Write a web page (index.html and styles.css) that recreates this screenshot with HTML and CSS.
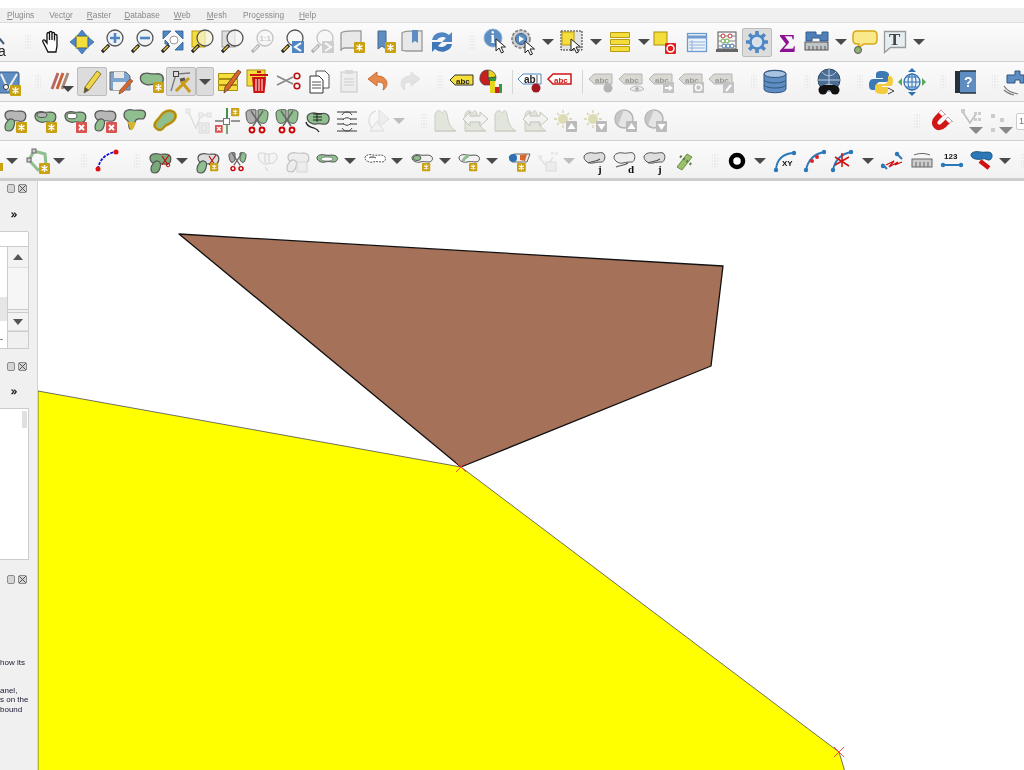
FILE: index.html
```html
<!DOCTYPE html>
<html lang="en">
<head>
<meta charset="utf-8">
<title>QGIS</title>
<link rel="stylesheet" href="styles.css">
</head>
<body>
<svg class="defs" aria-hidden="true">
<defs>
<path id="bl" stroke="#555" stroke-width="1.2" d="M1 6C1 2 6 1 10 2s7-1 10 1 2 8-1 9-6-1-9 0-9-1-9-6z"/>
<path id="bl2" stroke="#555" stroke-width="1.2" d="M1 9C1 5 5 0 8 1s3 4 2 7-2 5-5 5-4-1-4-4z"/>
<g id="bd"><rect width="11" height="11" rx="1" fill="#c9a112"/><path d="M5.5 2v7M2.5 3.5l6 4M8.5 3.5l-6 4" stroke="#fff" stroke-width="1.4"/></g>
<g id="rx"><rect width="11" height="11" rx="1" fill="#d9534f"/><path d="M3 3l5 5M8 3l-5 5" stroke="#fff" stroke-width="2"/></g>
<g id="mh"><path d="M12 18l-7 7" stroke="#222" stroke-width="3.2"/><path d="M11 19l-4.500 4.500" stroke="#e9c93c" stroke-width="1.500"/></g>
<circle id="lens" cx="18" cy="11" r="8" stroke="#555" stroke-width="1.300"/>
<path id="cur" fill="#fff" stroke="#222" d="M0 0l0 12 3-3 2.500 5 2-1-2.500-5 4.500 0z"/>
<path id="lb" d="M1 7l5-5h18v10H6z"/>
<g id="sc"><path d="M9 3l10 15M21 3L11 18" stroke="#666" stroke-width="1.500"/><circle cx="10" cy="22" r="2.500" fill="none" stroke="#c00" stroke-width="1.800"/><circle cx="20" cy="22" r="2.500" fill="none" stroke="#c00" stroke-width="1.800"/></g>
<g id="hill"><path d="M4 25V9c1-4 3-5 5-4s2 3 3 1 3-2 4 2 1 13 9 17z" fill="#e1e5dc" stroke="#c8ccc2"/><path d="M4 25h20" stroke="#c8ccc2"/></g>
<g id="lab"><use href="#lb" fill="#d6d3cc" stroke="#aaa"/><text x="7" y="11" class="t8" fill="#888">abc</text></g>
<g id="sun"><circle cx="12" cy="13" r="5" fill="#dedcb4"/><path d="M12 4v3M12 19v3M3 13h3M18 13h3M6 7l2 2M18 7l-2 2M6 19l2-2" stroke="#d3d1ac" stroke-width="1.300"/><rect x="15" y="15" width="11" height="11" rx="1" fill="#bbb"/></g>
<g id="moon"><circle cx="13" cy="13" r="9" fill="#e4e4e4" stroke="#b4b4b4" stroke-width="1.500"/><path d="M13 4a9 9 0 0 0-6 15z" fill="#c6c6c6"/><rect x="15" y="15" width="11" height="11" rx="1" fill="#bbb"/></g>
<g id="end"><circle r="2.200" fill="#2a78b8"/></g>
</defs>

<symbol id="p1" viewBox="0 0 30 30"><path d="M8 6L17 17" stroke="#47607a" stroke-width="2"/><text x="11" y="29" class="t12" fill="#222">a</text></symbol>
<symbol id="hand" viewBox="0 0 30 30"><path fill="#fff" stroke="#111" stroke-width="1.300" d="M10 23L6 15c-1-2 1-3 2.500-1L10 16V7c0-2 2.500-2 2.500 0v6-7.500c0-1.500 2.500-1.500 2.500 0V13 6.500c0-1.500 2.500-1.500 2.500 0v7-5c0-1.500 2.500-1.500 2.500 0V18c0 3-1 5-1 7h-8z"/></symbol>
<symbol id="pan" viewBox="0 0 30 30"><rect x="9" y="9" width="12" height="12" fill="#f5dd3c" stroke="#b79b12"/><path d="M15 3l5 6H10zM15 27l5-6H10zM3 15l6-5v10zM27 15l-6-5v10z" fill="#4e87c4" stroke="#2e5f99" stroke-width=".7"/></symbol>
<symbol id="zin" viewBox="0 0 30 30"><use href="#mh"/><use href="#lens" fill="#f0f3f6"/><path d="M18 6v10M13 11h10" stroke="#4e87c4" stroke-width="2.600"/></symbol>
<symbol id="zout" viewBox="0 0 30 30"><use href="#mh"/><use href="#lens" fill="#f0f3f6"/><path d="M13 11h10" stroke="#4e87c4" stroke-width="2.600"/></symbol>
<symbol id="zfull" viewBox="0 0 30 30"><path d="M6 4h8l-8 8zM26 4v8l-8-8zM26 23h-8l8-8zM8 17v-4l4 4z" fill="#4e87c4" stroke="#2d5c93" stroke-width=".8"/><circle cx="17" cy="13" r="4" fill="#fff" stroke="#999"/><use href="#mh"/></symbol>
<symbol id="zsel" viewBox="0 0 30 30"><rect x="5" y="4" width="13" height="16" fill="#f5dd3c" stroke="#b79b12"/><use href="#mh"/><use href="#lens" fill="#f7f4d8" fill-opacity=".7"/></symbol>
<symbol id="zlay" viewBox="0 0 30 30"><rect x="5" y="4" width="13" height="16" fill="#ddd" stroke="#999"/><use href="#mh"/><use href="#lens" fill="#f5f5f5" fill-opacity=".7"/></symbol>
<symbol id="z11" viewBox="0 0 30 30"><use href="#mh"/><use href="#lens" fill="#f5f5f5"/><text x="12.500" y="14" class="t8b" fill="#666">1:1</text></symbol>
<symbol id="zlast" viewBox="0 0 30 30"><use href="#mh"/><use href="#lens" fill="#f7f7f7"/><rect x="15" y="14" width="12" height="12" fill="#4e87c4"/><path d="M24 16l-6 4 6 4" fill="none" stroke="#fff" stroke-width="2"/></symbol>
<symbol id="znext" viewBox="0 0 30 30"><use href="#mh"/><use href="#lens" fill="#f7f7f7"/><rect x="15" y="14" width="12" height="12" fill="#4e87c4"/><path d="M18 16l6 4-6 4" fill="none" stroke="#fff" stroke-width="2"/></symbol>
<symbol id="nmap" viewBox="0 0 30 30"><path d="M4 6c3-3 16-2 20-2v17H8c-2 0-4 1-4 3z" fill="#e8e8e8" stroke="#999" stroke-width="1.300"/><use href="#bd" x="17" y="15"/></symbol>
<symbol id="nbm" viewBox="0 0 30 30"><path d="M11 4h8v18l-4-3-4 3z" fill="#5e8dc2" stroke="#46688f"/><use href="#bd" x="18" y="15"/></symbol>
<symbol id="sbm" viewBox="0 0 30 30"><path d="M5 6c3-3 15-2 20-2v20H9c-2 0-4-1-4 0z" fill="#e8e8e8" stroke="#999" stroke-width="1.300"/><path d="M15 3h6v13l-3-2-3 2z" fill="#5e8dc2"/></symbol>
<symbol id="refr" viewBox="0 0 30 30"><path d="M5 13a10 9 0 0 1 17-5l3-3v10H15l4-4a6 5 0 0 0-9 2z" fill="#4e87c4"/><path d="M25 17a10 9 0 0 1-17 5l-3 3V15h10l-4 4a6 5 0 0 0 9-2z" fill="#3f78b8"/></symbol>
<symbol id="iden" viewBox="0 0 30 30"><circle cx="12" cy="11" r="9" fill="#5e8dc2" stroke="#8fb2d8"/><text x="9.500" y="16" class="t13" fill="#fff">i</text><use href="#cur" x="15" y="12"/></symbol>
<symbol id="act" viewBox="0 0 30 30"><circle cx="12" cy="12" r="9" fill="#ccc" stroke="#777" stroke-width="1.500" stroke-dasharray="3 1.500"/><circle cx="12" cy="12" r="5.500" fill="#5e8dc2" stroke="#355f90"/><path d="M10 9l5 3-5 3z" fill="#fff"/><use href="#cur" x="16" y="14"/></symbol>
<symbol id="sel" viewBox="0 0 30 30"><rect x="4" y="4" width="21" height="19" fill="#e3e3e3" stroke="#333" stroke-dasharray="2 1"/><rect x="5" y="5" width="12" height="13" fill="#f5dd3c" stroke="#b79b12"/><use href="#cur" x="14" y="12"/></symbol>
<symbol id="stack" viewBox="0 0 30 30"><path d="M5.500 5.500h19v5h-19zM5.500 12.500h19v5h-19zM5.500 19.500h19v5h-19z" fill="#f5dd3c" stroke="#b79b12"/></symbol>
<symbol id="desel" viewBox="0 0 30 30"><rect x="4" y="5" width="13" height="13" fill="#f5dd3c" stroke="#a88f12"/><rect x="15" y="16" width="11" height="11" rx="1" fill="#d22"/><circle cx="20.500" cy="21.500" r="3.500" fill="none" stroke="#fff" stroke-width="1.500"/></symbol>
<symbol id="tab" viewBox="0 0 30 30"><rect x="5.500" y="6.500" width="19" height="18" fill="#eef3fa" stroke="#6f9bcc" stroke-width="1.300"/><path d="M5 10h20" stroke="#6f9bcc" stroke-width="3"/><path d="M10 13v11M7 15h16M7 18h16M7 21h16" stroke="#8fb2d8"/></symbol>
<symbol id="aba" viewBox="0 0 30 30"><rect x="6" y="5" width="18" height="17" fill="#f6f6f6" stroke="#555"/><rect x="4" y="22" width="22" height="3" fill="#666"/><path d="M6 9h18M6 14h18M6 19h18" stroke="#888"/><circle cx="11" cy="9" r="2" fill="#fff" stroke="#b33"/><circle cx="18" cy="9" r="2" fill="#fff" stroke="#b33"/><circle cx="11" cy="14" r="2" fill="#fff" stroke="#6a4"/><circle cx="15" cy="14" r="2" fill="#fff" stroke="#6a4"/><circle cx="12" cy="19" r="2" fill="#fff" stroke="#47a"/><circle cx="16" cy="19" r="2" fill="#fff" stroke="#47a"/><circle cx="20" cy="19" r="2" fill="#fff" stroke="#47a"/></symbol>
<symbol id="gear" viewBox="0 0 30 30"><g stroke="#4e87c4" stroke-width="3.600"><path d="M15 4v22M4 15h22M7.200 7.200l15.600 15.600M22.800 7.200L7.200 22.800"/></g><circle cx="15" cy="15" r="6.500" fill="#d6e3f2" stroke="#4e87c4" stroke-width="2.500"/><circle cx="15" cy="15" r="2.500" fill="#ddd"/></symbol>
<symbol id="sig" viewBox="0 0 30 30"><text x="7" y="25" class="t26" fill="#8d0f92">Σ</text></symbol>
<symbol id="meas" viewBox="0 0 30 30"><path d="M4 5h10v3h6V5h6v9h-8v-3h-8v3H4z" fill="#4f7fb5" stroke="#2d5c93"/><rect x="3" y="15" width="23" height="8" fill="#bfc4c7" stroke="#555"/><path d="M7 19v4M11 19v4M15 19v4M19 19v4M23 19v4" stroke="#555"/></symbol>
<symbol id="call" viewBox="0 0 30 30"><path d="M7 4h16c3 0 4 1 4 4v5c0 3-1 4-4 4H14l-6 4 1-4H7c-3 0-4-1-4-4V8c0-3 1-4 4-4z" fill="#f9e98a" stroke="#d6a818" stroke-width="1.500"/><circle cx="8" cy="23" r="3.500" fill="#8fb26a" stroke="#556"/></symbol>
<symbol id="txt" viewBox="0 0 30 30"><path d="M4.500 4.500h21v16h-15l-6 5z" fill="#e6eef2" stroke="#9a9a9a" stroke-width="1.300"/><text x="9" y="18" class="t16s" fill="#444">T</text></symbol>

<symbol id="p2" viewBox="0 0 30 30"><rect x="-2" y="5" width="21" height="21" rx="2" fill="#5e8dc2" stroke="#3a5f88"/><path d="M1 7l7 15 9-15" fill="none" stroke="#eee" stroke-width="2"/><circle cx="6" cy="20" r="2.500" fill="#fff" stroke="#333"/><use href="#bd" x="10" y="18"/></symbol>
<symbol id="pens" viewBox="0 0 30 30"><g stroke-width="3"><path d="M11 6L5 22" stroke="#b66"/><path d="M16 6l-6 16" stroke="#c4633a"/><path d="M21 6l-6 16" stroke="#a87"/></g><path d="M15 19h12l-6 6z" fill="#444"/></symbol>
<symbol id="pen" viewBox="0 0 30 30"><path d="M20 4l4 3-12 16-5 3 1-6z" fill="#f0d54a" stroke="#8a7a20"/><path d="M7 26l1-6 4 3z" fill="#555"/></symbol>
<symbol id="save" viewBox="0 0 30 30"><path d="M5 5h16l4 4v14H5z" fill="#7ea5cf" stroke="#666"/><rect x="9" y="5" width="10" height="6" fill="#e8e8e8"/><rect x="8" y="15" width="13" height="8" fill="#eee"/><path d="M25 12l3 2-10 11-4 2 1-4z" fill="#d9662f" stroke="#7a4a2a" stroke-width=".7"/></symbol>
<symbol id="add" viewBox="0 0 30 30"><use href="#bl" x="3" y="4" fill="#8fbf8f" transform="scale(1.100)"/><use href="#bd" x="17" y="15"/></symbol>
<symbol id="vtx" viewBox="0 0 30 30"><path d="M5 24L10 7l14-1" fill="none" stroke="#777" stroke-width="1.300"/><rect x="7.500" y="4.500" width="5" height="5" fill="#ddd" stroke="#444"/><path d="M10 24L23 11M15 14l9 11" stroke="#c99a1c" stroke-width="3"/><path d="M14 13l5-1" stroke="#555" stroke-width="3"/></symbol>
<symbol id="edit" viewBox="0 0 30 30"><path d="M4.500 6.500h19v5h-19zM4.500 12.500h19v5h-19zM4.500 18.500h19v5h-19z" fill="#f5dd3c" stroke="#a88f12"/><path d="M24 3l3 2-12 17-5 4 1-6z" fill="#d9662f" stroke="#5a3a22" stroke-width=".8"/></symbol>
<symbol id="del" viewBox="0 0 30 30"><rect x="3" y="3" width="18" height="16" fill="#f5dd3c" stroke="#a88f12"/><path d="M6 8h18M13 5h4" stroke="#c11" stroke-width="2.200"/><path d="M8 10h14l-1.500 16h-11z" fill="#c11"/><path d="M12 12v12M15 12v12M18 12v12" stroke="#fff"/></symbol>
<symbol id="cut" viewBox="0 0 30 30"><path d="M3 9l16 8M3 18l16-8" stroke="#888" stroke-width="1.600"/><circle cx="23" cy="9" r="2.800" fill="none" stroke="#b11" stroke-width="1.600"/><circle cx="23" cy="19" r="2.800" fill="none" stroke="#b11" stroke-width="1.600"/></symbol>
<symbol id="copy" viewBox="0 0 30 30"><path d="M12 4h9l4 4v13H12z" fill="#fff" stroke="#555"/><path d="M6 9h9l4 4v13H6z" fill="#fff" stroke="#333"/><path d="M8 15h9M8 18h9M8 21h9" stroke="#555"/></symbol>
<symbol id="paste" viewBox="0 0 30 30"><rect x="7" y="5" width="16" height="20" fill="#ddd" stroke="#666"/><rect x="11" y="3" width="8" height="4" fill="#999"/><path d="M10 12h10M10 15h10M10 18h10" stroke="#777"/></symbol>
<symbol id="undo" viewBox="0 0 30 30"><path d="M13 5L4 12l9 7v-4c6 0 8 2 6 8 6-3 6-14-6-14z" fill="#e58a4e" stroke="#c96e34"/></symbol>
<symbol id="redo" viewBox="0 0 30 30"><path d="M17 5l9 7-9 7v-4c-6 0-8 2-6 8-6-3-6-14 6-14z" fill="#bbb" stroke="#aaa"/></symbol>
<symbol id="abc" viewBox="0 0 30 30"><g transform="translate(3 6)"><use href="#lb" fill="#f5dd3c" stroke="#333"/><text x="7" y="11" class="t8b" fill="#222">abc</text></g></symbol>
<symbol id="chart" viewBox="0 0 30 30"><path d="M12 11V3a8 8 0 0 1 8 7z" fill="#e9d41c" stroke="#444" stroke-width=".7"/><path d="M12 11l8-1a8 8 0 0 1-4 7z" fill="#2f9b36" stroke="#444" stroke-width=".7"/><path d="M12 11V3a8 8 0 0 0-4 15l8 0z" fill="#c62020" stroke="#444" stroke-width=".7"/><rect x="14" y="14" width="5" height="12" fill="#e9d41c"/><rect x="19" y="20" width="4" height="6" fill="#c22"/><rect x="23" y="17" width="3" height="9" fill="#2f9b36"/></symbol>
<symbol id="abpin" viewBox="0 0 30 30"><g transform="translate(2 5)"><use href="#lb" fill="#fff" stroke="#4e87c4"/><text x="7" y="11" class="t9b" fill="#222">ab</text></g><path d="M22 8v10" stroke="#aaa" stroke-width="2"/><circle cx="21" cy="21" r="4.500" fill="#a01820"/></symbol>
<symbol id="abcr" viewBox="0 0 30 30"><g transform="translate(2 5)"><use href="#lb" fill="#fff" stroke="#d01515" stroke-width="1.500"/><text x="7" y="11" class="t8b" fill="#d01515">abc</text></g></symbol>
<symbol id="d1" viewBox="0 0 30 30"><g transform="translate(1 5)"><use href="#lab"/></g><circle cx="21" cy="21" r="4.500" fill="#aaa"/></symbol>
<symbol id="d2" viewBox="0 0 30 30"><g transform="translate(1 5)"><use href="#lab"/></g><path d="M13 22c4-4 10-4 14 0-4 3-10 3-14 0z" fill="#eee" stroke="#aaa"/><circle cx="20" cy="22" r="2" fill="#aaa"/></symbol>
<symbol id="d3" viewBox="0 0 30 30"><g transform="translate(1 5)"><use href="#lab"/></g><rect x="16" y="15" width="11" height="11" fill="#bbb"/><path d="M18 20h4v-2l4 3-4 3v-2h-4z" fill="#fff"/></symbol>
<symbol id="d4" viewBox="0 0 30 30"><g transform="translate(1 5)"><use href="#lab"/></g><rect x="16" y="15" width="11" height="11" fill="#bbb"/><circle cx="21.500" cy="20.500" r="3" fill="none" stroke="#fff" stroke-width="1.500"/></symbol>
<symbol id="d5" viewBox="0 0 30 30"><g transform="translate(1 5)"><use href="#lab"/></g><rect x="16" y="15" width="11" height="11" fill="#bbb"/><path d="M19 24l5-6" stroke="#fff" stroke-width="2"/></symbol>
<symbol id="db" viewBox="0 0 30 30"><path d="M4 7c0-5 22-5 22 0v15c0 5-22 5-22 0z" fill="#5e8dc2" stroke="#2f5680"/><ellipse cx="15" cy="7" rx="11" ry="3.500" fill="#a8c3df" stroke="#2f5680"/><path d="M4 13c2 4 20 4 22 0M4 18c2 4 20 4 22 0" fill="none" stroke="#2f5680"/></symbol>
<symbol id="gbin" viewBox="0 0 30 30"><circle cx="15" cy="13" r="11" fill="#4a6e96" stroke="#2f4b68"/><path d="M4 13h22M15 2v22M8 5c4 5 10 5 14 0M8 21c4-5 10-5 14 0" stroke="#b8cbe0" fill="none"/><circle cx="9" cy="23" r="4.500" fill="#111"/><circle cx="21" cy="23" r="4.500" fill="#111"/><rect x="9" y="18" width="12" height="5" fill="#111"/></symbol>
<symbol id="py" viewBox="0 0 30 30"><path d="M15 4c-5 0-6 1-6 4v3h7v1H6c-3 0-4 3-4 6s1 5 4 5h3v-4c0-2 2-4 4-4h6c2 0 3-1 3-3V8c0-3-3-4-7-4z" fill="#3b7ab5"/><path d="M15 27c5 0 6-1 6-4v-3h-6v-1h9c1 0 2-2 2-5s-1-5-4-5h-1v4c0 2-2 4-4 4h-6c-2 0-3 1-3 3v3c0 3 3 4 7 4z" fill="#f2cc3f"/><path d="M21 21l6 3-6 3" fill="none" stroke="#444"/></symbol>
<symbol id="gl" viewBox="0 0 30 30"><circle cx="15" cy="15" r="8" fill="#e6eef7" stroke="#2f6fb2" stroke-width="1.300"/><path d="M7 15h16M15 7v16M9 10h12M9 20h12" stroke="#2f6fb2"/><ellipse cx="15" cy="15" rx="4" ry="8" fill="none" stroke="#2f6fb2"/><path d="M1 15l4-4v8zM29 15l-4-4v8z" fill="#55a855"/><path d="M15 1l4 4h-8zM15 29l4-4h-8z" fill="#2f6fb2"/></symbol>
<symbol id="help" viewBox="0 0 30 30"><rect x="5" y="4" width="21" height="22" fill="#5e8dc2"/><rect x="5" y="4" width="5" height="22" fill="#26303c"/><path d="M10 4h16M10 26h16" stroke="#26303c" stroke-width="1.500"/><text x="14" y="20" class="t14b" fill="#fff">?</text></symbol>
<symbol id="p3" viewBox="0 0 30 30"><path d="M5 8h8V4h5v4h4v8h-4v-3h-5v3H5z" fill="#5e8dc2" stroke="#2f5680"/><path d="M2 19c3 5 8 7 14 8M2 23c3 3 6 4 10 5" fill="none" stroke="#777" stroke-width="1.200"/></symbol>

<symbol id="r1" viewBox="0 0 30 30"><use href="#bl" x="4" y="3" fill="#b7b7b7"/><use href="#bl2" x="4" y="12" fill="#8fbf8f"/><use href="#bd" x="16" y="16"/></symbol>
<symbol id="r2" viewBox="0 0 30 30"><use href="#bl" x="4" y="4" fill="#8fbf8f"/><ellipse cx="12" cy="9" rx="5" ry="2.500" fill="#b7b7b7" stroke="#555"/><use href="#bd" x="16" y="16"/></symbol>
<symbol id="r3" viewBox="0 0 30 30"><use href="#bl" x="4" y="4" fill="#8fbf8f"/><ellipse cx="12" cy="10" rx="5" ry="2.800" fill="#fff" stroke="#555"/><use href="#rx" x="16" y="16"/></symbol>
<symbol id="r4" viewBox="0 0 30 30"><use href="#bl" x="4" y="3" fill="#b7b7b7"/><use href="#bl2" x="4" y="12" fill="#8fbf8f"/><use href="#rx" x="16" y="16"/></symbol>
<symbol id="r5" viewBox="0 0 30 30"><path d="M4 9c0-5 5-6 9-5s8-1 11 1 1 8-2 8-4-1-6 1-2 8-5 9-2-7-3-8-4-2-4-6z" fill="#8fbf8f" stroke="#555" stroke-width="1.200"/><path d="M6 15c3 2 9 1 10 1-1 3-2 7-4 8-3 0-2-6-6-9z" fill="#d9b52c"/></symbol>
<symbol id="r6" viewBox="0 0 30 30"><path d="M6 22c-4-4 2-8 4-11s6-7 11-6 6 6 2 10-7 3-9 6-5 4-8 1z" fill="#8fbf8f" stroke="#c9a112" stroke-width="3"/><path d="M6 22c-4-4 2-8 4-11s6-7 11-6 6 6 2 10-7 3-9 6-5 4-8 1z" fill="none" stroke="#555" stroke-width=".5"/></symbol>
<symbol id="r7" viewBox="0 0 30 30"><path d="M6 5l8 17 5-13h8" fill="none" stroke="#aaa" stroke-width="1.500"/><rect x="4" y="3" width="4" height="4" fill="#ddd" stroke="#aaa"/><rect x="17" y="7" width="4" height="4" fill="#ddd" stroke="#aaa"/><rect x="25" y="7" width="4" height="4" fill="#ddd" stroke="#aaa"/><rect x="17" y="17" width="10" height="10" fill="#ddd" stroke="#aaa"/><circle cx="22" cy="22" r="3" fill="none" stroke="#aaa"/></symbol>
<symbol id="r8" viewBox="0 0 30 30"><path d="M15 2v12" stroke="#4a8f4a" stroke-width="2"/><path d="M15 18v10" stroke="#4a8f4a" stroke-width="1.500"/><path d="M3 15h8M19 15h9" stroke="#777" stroke-width="1.500"/><rect x="11.500" y="12.500" width="6" height="6" fill="#fff" stroke="#777"/><use href="#bd" transform="translate(19 2) scale(.75)"/><use href="#rx" transform="translate(3 19) scale(.7)"/></symbol>
<symbol id="r9" viewBox="0 0 30 30"><path d="M4 7c0-3 5-4 10-3v10c-1 3-5 4-7 3s-3-6-3-10z" fill="#b0b0b0" stroke="#555"/><path d="M26 7c0-3-5-4-10-3v10c1 3 5 4 7 3s3-6 3-10z" fill="#8fbf8f" stroke="#555"/><use href="#sc" y="2"/></symbol>
<symbol id="r10" viewBox="0 0 30 30"><path d="M4 7c0-3 5-4 10-3v10c-1 3-5 4-7 3s-3-6-3-10z" fill="#8fbf8f" stroke="#555"/><path d="M26 7c0-3-5-4-10-3v10c1 3 5 4 7 3s3-6 3-10z" fill="#8fbf8f" stroke="#555"/><use href="#sc" y="2"/></symbol>
<symbol id="r11" viewBox="0 0 30 30"><use href="#bl" x="4" y="5" fill="#8fbf8f" transform="scale(1.050)"/><path d="M11 8h9M11 11h9M11 14h9M15 7v9" stroke="#222"/><path d="M4 16c1 5 5 5 8 6s4 2 5 4" fill="none" stroke="#222" stroke-width="1.300"/></symbol>
<symbol id="r12" viewBox="0 0 30 30"><path d="M5 6h20M5 25h20M5 13h7M18 13h7M5 18h7M18 18h7" stroke="#777" stroke-width="1.300"/><path d="M10 9c2-4 8-4 10 0M10 22c2 4 8 4 10 0M11 14c2-3 6-3 8 0M11 17c2 3 6 3 8 0" fill="none" stroke="#444"/></symbol>
<symbol id="r13" viewBox="0 0 30 30"><path d="M17 4l10 9-10 8z" fill="#ddd" stroke="#aaa"/><path d="M14 5c-8 2-9 12-4 17" fill="none" stroke="#aaa" stroke-width="1.300"/><path d="M8 25h14l-7-10z" fill="#eee" stroke="#aaa"/></symbol>
<symbol id="h1" viewBox="0 0 30 30"><use href="#hill"/></symbol>
<symbol id="h2" viewBox="0 0 30 30"><use href="#hill"/><path d="M2 13l7-7v4h10V6l8 7-8 7v-4H9v4z" fill="#f2f2f0" stroke="#c2c4bd"/></symbol>
<symbol id="s1" viewBox="0 0 30 30"><use href="#sun"/><path d="M20.500 17l4 6h-8z" fill="#fff"/></symbol>
<symbol id="s2" viewBox="0 0 30 30"><use href="#sun"/><path d="M20.500 24l4-6h-8z" fill="#fff"/></symbol>
<symbol id="m1" viewBox="0 0 30 30"><use href="#moon"/><path d="M20.500 17l4 6h-8z" fill="#fff"/></symbol>
<symbol id="m2" viewBox="0 0 30 30"><use href="#moon"/><path d="M20.500 24l4-6h-8z" fill="#fff"/></symbol>
<symbol id="mag" viewBox="0 0 30 30"><path d="M17 6l-6 6c-3 3-3 6-1 8s5 2 8-1l6-6" fill="none" stroke="#d01818" stroke-width="5.500"/><path d="M17.500 5.500l-3 3M24.500 12.500l-3 3" stroke="#fff" stroke-width="5"/><path d="M15 4l5 5M22 11l5 5" stroke="#999" stroke-width=".8"/></symbol>
<symbol id="snp1" viewBox="0 0 30 30"><path d="M6 5l8 12 6-9" fill="none" stroke="#bbb" stroke-width="1.500"/><path d="M5 3h4v4H5zM18 6h3v3h-3zM22 6h3v3h-3zM18 12h3v3h-3zM22 12h3v3h-3z" fill="#ccc"/><path d="M13 21h14l-7 7z" fill="#888"/></symbol>
<symbol id="snp2" viewBox="0 0 30 30"><path d="M5 8h4v4H5zM14 12h4v4h-4zM5 22h4v4H5z" fill="#ccc"/><path d="M13 21h14l-7 7z" fill="#888"/></symbol>

<symbol id="p4" viewBox="0 0 30 30"><rect x="27" y="17" width="3" height="8" fill="#c9a112"/></symbol>
<symbol id="ring" viewBox="0 0 30 30"><path d="M7 14L12 5l11 3 1 12-8 4z" fill="none" stroke="#8fbf8f" stroke-width="3"/><rect x="10" y="3" width="4" height="4" fill="#ccc" stroke="#666"/><rect x="5" y="12" width="4" height="4" fill="#ccc" stroke="#666"/><use href="#bd" x="17" y="17"/></symbol>
<symbol id="arc" viewBox="0 0 30 30"><path d="M6 23C7 14 14 7 24 6" fill="none" stroke="#1313d0" stroke-width="1.800" stroke-dasharray="3 1.200"/><circle cx="6" cy="23" r="2.500" fill="#e01010"/><circle cx="24" cy="6" r="2.500" fill="#e01010"/></symbol>
<symbol id="c1" viewBox="0 0 30 30"><use href="#bl" x="4" y="6" fill="#7aa97a"/><use href="#bl2" x="5" y="14" fill="#7aa97a"/><path d="M17 10l6 9M24 9l-7 10" stroke="#b11" stroke-width="1.200"/><circle cx="23" cy="19" r="1.800" fill="none" stroke="#b11"/></symbol>
<symbol id="c2" viewBox="0 0 30 30"><use href="#bl" x="5" y="6" fill="#ddd"/><use href="#bl2" x="4" y="14" fill="#8fbf8f"/><path d="M17 10l6 9M24 9l-7 10" stroke="#b11" stroke-width="1.200"/><use href="#bd" transform="translate(18 17) scale(.75)"/></symbol>
<symbol id="c3" viewBox="0 0 30 30"><path d="M7 9c0-2 3-3 6-2v7c-1 2-3 3-4 2s-2-4-2-7z" fill="#aaa" stroke="#555"/><path d="M24 9c0-2-3-3-6-2v7c1 2 3 3 4 2s2-4 2-7z" fill="#8fbf8f" stroke="#555"/><g transform="translate(3 5) scale(.8)"><use href="#sc"/></g></symbol>
<symbol id="c4" viewBox="0 0 30 30"><path d="M6 8c3-2 6-1 9 0s6-2 9 0 0 8-3 9-3 0-6 1-9-2-9-10z" fill="#eee" stroke="#888"/><path d="M13 8v9M17 8v9M13 21c2 1 1 3 3 4" stroke="#888" fill="none"/></symbol>
<symbol id="c5" viewBox="0 0 30 30"><use href="#bl" x="5" y="5" fill="#ddd"/><use href="#bl2" x="4" y="13" fill="#ddd"/><rect x="15" y="16" width="10" height="10" fill="#ddd" stroke="#999"/></symbol>
<symbol id="c6" viewBox="0 0 30 30"><path d="M5 12c0-3 4-4 8-3s8-1 11 1 1 6-2 6-6-1-9 0-8-1-8-4z" fill="#8fbf8f" stroke="#555"/><ellipse cx="15" cy="13" rx="6" ry="2" fill="#fff" stroke="#555" stroke-width=".6"/></symbol>
<symbol id="c7" viewBox="0 0 30 30"><path d="M5 12c0-3 4-4 8-3s8-1 11 1 1 6-2 6-6-1-9 0-8-1-8-4z" fill="#fff" stroke="#555" stroke-dasharray="2 1"/><path d="M9 12c2-2 5-1 7 0" fill="#8fbf8f" stroke="#555"/></symbol>
<symbol id="c8" viewBox="0 0 30 30"><path d="M5 12c0-3 4-4 8-3s8-1 11 1 1 6-2 6-6-1-9 0-8-1-8-4z" fill="#f2f2f2" stroke="#555"/><ellipse cx="10" cy="12" rx="4" ry="2.500" fill="#8fbf8f" stroke="#555"/><use href="#bd" transform="translate(15 17) scale(.75)"/></symbol>
<symbol id="c9" viewBox="0 0 30 30"><path d="M5 12c0-3 4-4 8-3s8-1 11 1 1 6-2 6-6-1-9 0-8-1-8-4z" fill="#f2f2f2" stroke="#555"/><path d="M9 15c1-3 4-5 6-5" stroke="#8fbf8f" stroke-width="3"/><use href="#bd" transform="translate(15 17) scale(.75)"/></symbol>
<symbol id="c10" viewBox="0 0 30 30"><path d="M5 11l5-3h16l-3 8H8z" fill="#eee" stroke="#666"/><circle cx="9" cy="12" r="4" fill="#2f6fb2"/><path d="M16 9l7-1-2 7-5-1z" fill="#d9662f"/><use href="#bd" transform="translate(13 17) scale(.8)"/></symbol>
<symbol id="c11" viewBox="0 0 30 30"><path d="M6 11l8 10 6-10" fill="none" stroke="#bbb" stroke-width="1.500"/><path d="M5 9h4v4H5zM18 6h3v3h-3zM22 6h3v3h-3z" fill="#ccc"/><rect x="13" y="16" width="10" height="9" fill="#ddd" stroke="#aaa"/></symbol>
<symbol id="c12" viewBox="0 0 30 30"><path d="M5 11c0-3 5-5 9-4s9-2 11 1 0 8-2 8-5 0-9 1-9-2-9-6z" fill="#ddd" stroke="#555"/><path d="M9 17c4-2 8-1 12-4" fill="none" stroke="#555" stroke-width="1.200"/><text x="19" y="27" class="t10s" fill="#111">j</text></symbol>
<symbol id="c13" viewBox="0 0 30 30"><path d="M5 11c0-3 5-5 9-4s9-2 11 1 0 8-2 8-5 0-9 1-9-2-9-6z" fill="#eee" stroke="#555"/><path d="M7 21c4-2 8-1 12-4" fill="none" stroke="#555" stroke-width="1.200"/><text x="19" y="27" class="t10s" fill="#111">d</text></symbol>
<symbol id="c14" viewBox="0 0 30 30"><path d="M8 21l10-13 5 3-10 13z" fill="#9bc06a" stroke="#6d8f4a"/><path d="M11 10l12 9" stroke="#5f7f45" stroke-width="2.500" stroke-dasharray="2 2"/></symbol>
<symbol id="donut" viewBox="0 0 30 30"><circle cx="15" cy="15" r="6" fill="#fff" stroke="#000" stroke-width="4.500"/></symbol>
<symbol id="xy" viewBox="0 0 30 30"><path d="M6 23C7 14 12 8 23 7" fill="none" stroke="#2a78b8" stroke-width="1.800"/><use href="#end" x="6" y="24"/><use href="#end" x="24" y="7"/><text x="12" y="20" class="t8b" fill="#111">XY</text></symbol>
<symbol id="seg" viewBox="0 0 30 30"><path d="M6 24C8 14 14 8 24 6" fill="none" stroke="#2a78b8" stroke-width="1.800"/><use href="#end" x="6" y="24"/><use href="#end" x="24" y="6"/><circle cx="12" cy="15" r="2" fill="#d22"/><circle cx="17" cy="11" r="2" fill="#d22"/></symbol>
<symbol id="inter" viewBox="0 0 30 30"><path d="M6 24C8 14 14 8 24 6" fill="none" stroke="#2a78b8" stroke-width="1.800"/><use href="#end" x="6" y="24"/><use href="#end" x="24" y="6"/><path d="M8 11l14 9M15 7l0 14M8 19l14-8" stroke="#d01010" stroke-width="1.500"/></symbol>
<symbol id="zig" viewBox="0 0 30 30"><path d="M5 18l5 5M20 8l5 5" stroke="#2a78b8" stroke-width="2"/><use href="#end" x="6" y="20"/><use href="#end" x="20" y="8"/><path d="M9 19l8-4-5 6 9-5-3 3 7-3" fill="none" stroke="#d01010" stroke-width="1.300"/></symbol>
<symbol id="rul" viewBox="0 0 30 30"><path d="M7 9c5-2 11-2 16 0" fill="none" stroke="#666"/><rect x="5" y="13" width="20" height="8" fill="#ccc" stroke="#666"/><path d="M9 16v5M13 16v5M17 16v5M21 16v5" stroke="#666"/></symbol>
<symbol id="n123" viewBox="0 0 30 30"><text x="7" y="13" class="t8b" fill="#111">123</text><path d="M6 19h18" stroke="#2a78b8" stroke-width="2"/><use href="#end" x="6" y="19"/><use href="#end" x="24" y="19"/></symbol>
<symbol id="shape" viewBox="0 0 30 30"><path d="M4 9c0-3 5-4 9-3s9-1 11 1 1 7-2 7-3-2-7-1-11 0-11-4z" fill="#2a78b8" stroke="#1c5680"/><path d="M13 15l9 7" stroke="#d01010" stroke-width="4.500"/></symbol>
</svg>

<header class="menu">
<span class="mi mi1"><u>P</u>lugins</span><span class="mi">Vect<u>o</u>r</span><span class="mi"><u>R</u>aster</span><span class="mi"><u>D</u>atabase</span><span class="mi"><u>W</u>eb</span><span class="mi"><u>M</u>esh</span><span class="mi">Pro<u>c</u>essing</span><span class="mi"><u>H</u>elp</span>
</header>

<div class="bar r1">
<svg class="i first1"><use href="#p1"/></svg><b class="h m2"></b>
<svg class="i"><use href="#hand"/></svg><svg class="i"><use href="#pan"/></svg><svg class="i"><use href="#zin"/></svg><svg class="i"><use href="#zout"/></svg><svg class="i"><use href="#zfull"/></svg><svg class="i"><use href="#zsel"/></svg><svg class="i"><use href="#zlay"/></svg><svg class="i dis"><use href="#z11"/></svg><svg class="i"><use href="#zlast"/></svg><svg class="i dis"><use href="#znext"/></svg><svg class="i"><use href="#nmap"/></svg><svg class="i"><use href="#nbm"/></svg><svg class="i"><use href="#sbm"/></svg><svg class="i"><use href="#refr"/></svg>
<b class="h m6"></b>
<svg class="i"><use href="#iden"/></svg><svg class="i n2"><use href="#act"/></svg><b class="a"></b><svg class="i"><use href="#sel"/></svg><b class="a"></b><svg class="i"><use href="#stack"/></svg><b class="a"></b><svg class="i n3"><use href="#desel"/></svg><svg class="i m2"><use href="#tab"/></svg><svg class="i"><use href="#aba"/></svg><span class="on on1"><svg class="i"><use href="#gear"/></svg></span><svg class="i"><use href="#sig"/></svg><svg class="i"><use href="#meas"/></svg><b class="a"></b><svg class="i"><use href="#call"/></svg><svg class="i"><use href="#txt"/></svg><b class="a"></b>
</div>

<div class="bar r2">
<svg class="i"><use href="#p2"/></svg><b class="h n1"></b>
<svg class="i"><use href="#pens"/></svg><span class="on on1"><svg class="i"><use href="#pen"/></svg></span><svg class="i n2"><use href="#save"/></svg><svg class="i m1"><use href="#add"/></svg><span class="on on1"><svg class="i"><use href="#vtx"/></svg></span><span class="on on2"><b class="a"></b></span><svg class="i"><use href="#edit"/></svg><svg class="i"><use href="#del"/></svg><svg class="i"><use href="#cut"/></svg><svg class="i"><use href="#copy"/></svg><svg class="i dis"><use href="#paste"/></svg><svg class="i"><use href="#undo"/></svg><svg class="i dis"><use href="#redo"/></svg>
<b class="h m7"></b>
<svg class="i n3"><use href="#abc"/></svg><svg class="i"><use href="#chart"/></svg><i class="d d1"></i><svg class="i"><use href="#abpin"/></svg><svg class="i"><use href="#abcr"/></svg><i class="d d2"></i><svg class="i dm"><use href="#d1"/></svg><svg class="i dm"><use href="#d2"/></svg><svg class="i dm"><use href="#d3"/></svg><svg class="i dm"><use href="#d4"/></svg><svg class="i dm"><use href="#d5"/></svg>
<b class="h m8"></b><svg class="i n3"><use href="#db"/></svg><b class="h m8"></b><svg class="i n2"><use href="#gbin"/></svg><b class="h m7"></b><svg class="i n2"><use href="#py"/></svg><svg class="i"><use href="#gl"/></svg><b class="h m7"></b><svg class="i n2"><use href="#help"/></svg><b class="h m6"></b><svg class="i n2"><use href="#p3"/></svg>
</div>

<div class="bar r3">
<svg class="i"><use href="#r1"/></svg><svg class="i"><use href="#r2"/></svg><svg class="i"><use href="#r3"/></svg><svg class="i"><use href="#r4"/></svg><svg class="i"><use href="#r5"/></svg><svg class="i"><use href="#r6"/></svg><svg class="i dis m2"><use href="#r7"/></svg><svg class="i"><use href="#r8"/></svg><svg class="i"><use href="#r9"/></svg><svg class="i"><use href="#r10"/></svg><svg class="i"><use href="#r11"/></svg><svg class="i"><use href="#r12"/></svg><svg class="i dis"><use href="#r13"/></svg><b class="a n2 dis"></b>
<b class="h m7"></b>
<svg class="i n2"><use href="#h1"/></svg><svg class="i"><use href="#h2"/></svg><svg class="i"><use href="#h1"/></svg><svg class="i"><use href="#h2"/></svg><svg class="i"><use href="#s1"/></svg><svg class="i"><use href="#s2"/></svg><svg class="i"><use href="#m1"/></svg><svg class="i"><use href="#m2"/></svg>
<b class="h push"></b><svg class="i"><use href="#mag"/></svg><svg class="i"><use href="#snp1"/></svg><svg class="i"><use href="#snp2"/></svg><span class="spin">1</span>
</div>

<div class="bar r4">
<svg class="i first4"><use href="#p4"/></svg><b class="a"></b><svg class="i m1"><use href="#ring"/></svg><b class="a n2"></b>
<b class="h m7"></b><svg class="i n1"><use href="#arc"/></svg><b class="h m6"></b>
<svg class="i n1"><use href="#c1"/></svg><b class="a n2"></b><svg class="i m1"><use href="#c2"/></svg><svg class="i"><use href="#c3"/></svg><svg class="i dis"><use href="#c4"/></svg><svg class="i dis"><use href="#c5"/></svg><svg class="i"><use href="#c6"/></svg><b class="a n1"></b><svg class="i m1"><use href="#c7"/></svg><b class="a n2"></b><svg class="i m1"><use href="#c8"/></svg><b class="a n1"></b><svg class="i"><use href="#c9"/></svg><b class="a n1"></b><svg class="i m3"><use href="#c10"/></svg><svg class="i n1 dis"><use href="#c11"/></svg><b class="a n3 dis"></b><svg class="i m1"><use href="#c12"/></svg><svg class="i"><use href="#c13"/></svg><svg class="i"><use href="#c12"/></svg><svg class="i"><use href="#c14"/></svg>
<b class="h m7"></b><svg class="i n2"><use href="#donut"/></svg><b class="a n1"></b><svg class="i m1"><use href="#xy"/></svg><svg class="i"><use href="#seg"/></svg><svg class="i n3"><use href="#inter"/></svg><b class="a m2"></b><svg class="i"><use href="#zig"/></svg><svg class="i"><use href="#rul"/></svg><svg class="i"><use href="#n123"/></svg><svg class="i"><use href="#shape"/></svg><b class="a n1"></b><b class="h m1"></b>
</div>

<main class="work">
<aside class="dock">
<div class="dh"><i class="db"></i><i class="db x"></i></div>
<div class="more">»</div>
<div class="inp"></div>
<div class="lst">
<div class="cells"><div class="rowsel"></div><div class="dash">-</div></div>
<div class="sb"><div class="sb-btn"><b class="up"></b></div><div class="sb-tr"></div><div class="sb-btn low"><b class="dn"></b></div><div class="sb-cor"></div></div>
</div>
<div class="dh dh2"><i class="db"></i><i class="db x"></i></div>
<div class="more more2">»</div>
<div class="box"><div class="thumb"></div></div>
<div class="dh dh3"><i class="db"></i><i class="db x"></i></div>
<div class="help">
<p class="ln l1">how its</p>
<p class="ln l2">anel,</p>
<p class="ln">s on the</p>
<p class="ln">bound</p>
</div>
</aside>
<svg class="map" viewBox="38 181 986 589">
<polygon class="yel" points="38,391 461,467 839,752 846,775 38,775"/>
<polygon class="brn" points="179,234 723,266 711,366 461,467"/>
<path class="mk" d="M456 462l10 10M466 462l-10 10M834 747l10 10M844 747l-10 10"/>
</svg>
</main>
</body>
</html>
```
FILE: styles.css
```css
*{box-sizing:border-box}
html,body{margin:0;height:770px;overflow:hidden;background:#fff}
body{padding-top:8px;font-family:"Liberation Sans",Arial,sans-serif}
.defs{position:absolute;width:0;height:0}
.t8{font:700 8px "Liberation Sans",sans-serif}
.t8b{font:700 8px "Liberation Sans",sans-serif}
.t9b{font:700 10px "Liberation Sans",sans-serif}
.t10s{font:700 11px "Liberation Serif",serif}
.t12{font:400 14px "Liberation Sans",sans-serif}
.t13{font:700 16px "Liberation Serif",serif}
.t14b{font:700 14px "Liberation Sans",sans-serif}
.t16s{font:700 17px "Liberation Serif",serif}
.t26{font:700 26px "Liberation Serif",serif}

.menu{height:15px;display:flex;align-items:center;background:#f0f0f0;border-bottom:1px solid #dcdcdc;font-size:8.300px;color:#8a8a8a;white-space:nowrap;filter:blur(.3px)}
.mi1{margin-left:7px}
.mi:nth-child(2){margin-left:15px}
.mi:nth-child(3){margin-left:14px}
.mi:nth-child(4){margin-left:13px}
.mi:nth-child(5){margin-left:14px}
.mi:nth-child(6){margin-left:16px}
.mi:nth-child(7){margin-left:16px}
.mi:nth-child(8){margin-left:15px}

.bar{display:flex;align-items:center;width:1024px;overflow:hidden;background:linear-gradient(#fbfbfb,#f1f1f1);border-bottom:1px solid #cfcfcf;filter:blur(.3px)}
.r1{height:39px}
.r2{height:40px}
.r3{height:39px}
.r4{height:40px;padding-top:2px;border-bottom:3px solid #cdcdcd}
.i{flex:none;width:30px;height:30px;display:block}
.a{flex:none;width:18px;height:10px;position:relative}
.a::after{content:"";position:absolute;left:3px;top:2px;border-left:6px solid transparent;border-right:6px solid transparent;border-top:6px solid #4a4a4a}
.h{flex:none;width:18px;height:14px;background:radial-gradient(circle,#c9c9c9 .7px,transparent 1px) center/3px 3px;background-repeat:repeat;clip-path:inset(0 6px)}
.d{flex:none;width:1px;height:24px;background:#d6d6d6}
.d1{margin-left:6px;margin-right:2px}
.d2{margin-left:7px;margin-right:4px}
.dis{opacity:.32;filter:grayscale(1)}
.dm{opacity:.85}
.on{flex:none;display:flex;align-items:center;justify-content:center;height:29px;background:#dcdcdc;border:1px solid #bcbcbc;border-radius:2px}
.on1{width:30px}
.on1 .i{margin:0 -1px}
.on2{width:18px}
.first1{margin-left:-13px}
.first4{margin-left:-27px}
.m1{margin-left:1px}.m2{margin-left:2px}.m3{margin-left:3px}.m6{margin-left:6px}.m7{margin-left:7px}.m8{margin-left:8px}
.n1{margin-left:-1px}.n2{margin-left:-2px}.n3{margin-left:-3px}
.push{margin-left:237px}
.spin{flex:none;width:30px;height:17px;background:#fff;border:1px solid #ccc;border-radius:2px;font-size:9px;color:#777;padding-left:2px;line-height:15px}

.work{display:flex;height:589px}
.dock{flex:none;width:38px;height:589px;overflow:hidden;background:#f0f0f0;border-right:1px solid #d3d3dc;filter:blur(.25px)}
.dh{display:flex;justify-content:flex-end;gap:3px;padding:3px 10px 0 0;height:12px}
.db{width:8px;height:9px;background:#d5d5d5;border:1px solid #8c8c8c;border-radius:2px}
.db.x{width:9px;background:linear-gradient(45deg,transparent 44%,#555 44%,#555 56%,transparent 56%),linear-gradient(-45deg,transparent 44%,#555 44%,#555 56%,transparent 56%),#d5d5d5}
.more{width:37px;padding-left:11px;margin-top:16px;font-size:11px;line-height:10px;color:#000;-webkit-text-stroke:.3px #000}
.inp{margin-top:12px;width:29px;height:16px;background:#fff;border:1px solid #ccc;border-left:0;border-radius:0 2px 0 0}
.lst{display:flex;width:29px;height:102px;background:#fff;border:1px solid #ccc;border-width:0 1px 1px 0}
.cells{width:8px;display:flex;flex-direction:column;border-right:1px solid #ccc}
.rowsel{margin-top:50px;height:24px;background:#e6e6e6}
.dash{margin-top:14px;font-size:9px;line-height:9px;color:#222}
.sb{width:20px;display:flex;flex-direction:column;background:#f0f0f0}
.sb-btn{height:21px;display:flex;align-items:center;justify-content:center;background:#f3f3f3;border-bottom:1px solid #ddd}
.sb-btn.low{height:19px;border-top:1px solid #ccc}
.sb-tr{height:42px;background:#f6f6f6;margin-bottom:2px;border-bottom:1px solid #ccc}
.sb-cor{flex:1;border-top:1px solid #ccc}
.up{border-left:5px solid transparent;border-right:5px solid transparent;border-bottom:6px solid #555}
.dn{border-left:5px solid transparent;border-right:5px solid transparent;border-top:6px solid #555}
.dh2{margin-top:10px}
.more2{margin-top:15px}
.box{margin-top:12px;width:29px;height:152px;background:#fff;border:1px solid #ccc;border-width:1px 1px 1px 0;display:flex;justify-content:flex-end;padding:2px 1px 0 0}
.thumb{width:5px;height:17px;background:#e0e0e0}
.dh3{margin-top:12px}
.help{margin-top:74px;font-size:8px;line-height:9.500px;color:#181830;white-space:nowrap}
.ln{margin:0}
.l2{margin-top:18px}

.map{display:block;flex:1;width:986px;height:589px;background:#fff}
.yel{fill:#ff0;stroke:#33334d;stroke-width:.7}
.brn{fill:#a67159;stroke:#111;stroke-width:1.300;stroke-linejoin:round}
.mk{fill:none;stroke:#ff3b30;stroke-width:.9}
```
